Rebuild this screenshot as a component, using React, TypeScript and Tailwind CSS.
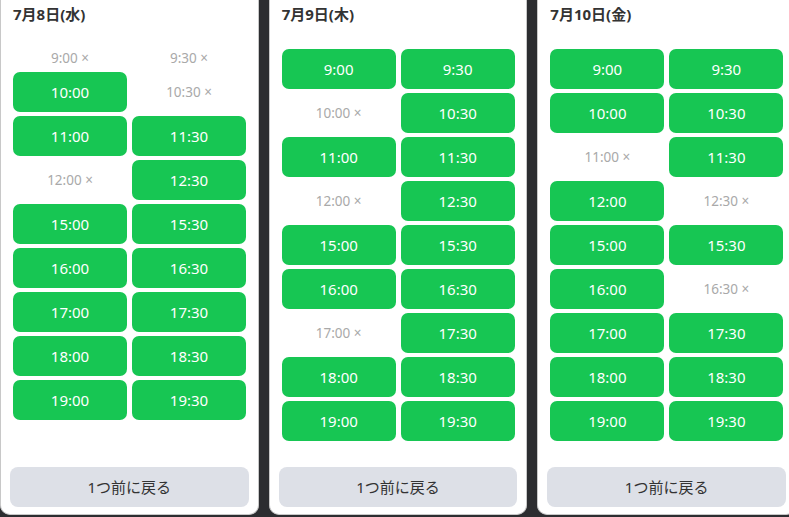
import React from "react";

/* ─── Slot data ─── */
type Slot = { time: string; open: boolean };

type Day = { label: string; slots: Slot[] };

const ALL_TIMES = [
  "9:00", "9:30", "10:00", "10:30", "11:00", "11:30", "12:00", "12:30",
  "15:00", "15:30", "16:00", "16:30", "17:00", "17:30", "18:00", "18:30",
  "19:00", "19:30",
];

function makeSlots(closed: string[]): Slot[] {
  return ALL_TIMES.map((time) => ({ time, open: !closed.includes(time) }));
}

const DAYS: Day[] = [
  { label: "7月8日(水)", slots: makeSlots(["9:00", "9:30", "10:30", "12:00"]) },
  { label: "7月9日(木)", slots: makeSlots(["10:00", "12:00", "17:00"]) },
  { label: "7月10日(金)", slots: makeSlots(["11:00", "12:30", "16:30"]) },
];

const FONT = { fontFamily: '"Noto Sans", "Noto Sans CJK JP", sans-serif' };

/* ─── Time slot ─── */
function SlotButton({ slot }: { slot: Slot }) {
  if (!slot.open) {
    return (
      <div className="self-center text-center text-[13.5px] leading-[19px] text-[#a9a9a9]">
        {slot.time} ×
      </div>
    );
  }
  return (
    <button className="flex h-[40px] items-center justify-center rounded-[7px] bg-[#17c653] text-[15px] text-white">
      {slot.time}
    </button>
  );
}

/* ─── Day card ─── */
function DayCard({ day }: { day: Day }) {
  return (
    <div className="flex h-[515px] w-[258.67px] shrink-0 flex-col rounded-b-[10px] border-x border-b border-[#c8c8c8] bg-white px-[9px] pb-[7px]">
      <div className="px-[3px] text-[15px] font-bold leading-[28px] text-[#333]">{day.label}</div>

      <div className="mt-[21px] grid grid-cols-[114px_114px] gap-x-[5px] gap-y-[4px] px-[3px]">
        {day.slots.map((s) => (
          <SlotButton key={s.time} slot={s} />
        ))}
      </div>

      <button className="mt-auto h-[40px] w-full rounded-[8px] bg-[#dde0e7] text-[15px] text-[#333]">
        1つ前に戻る
      </button>
    </div>
  );
}

export default function App() {
  return (
    <div className="h-[517px] w-[789px] overflow-hidden bg-[#2c2d30]" style={FONT}>
      <div className="flex items-start gap-[10px]">
        {DAYS.map((d) => (
          <DayCard key={d.label} day={d} />
        ))}
      </div>
    </div>
  );
}
